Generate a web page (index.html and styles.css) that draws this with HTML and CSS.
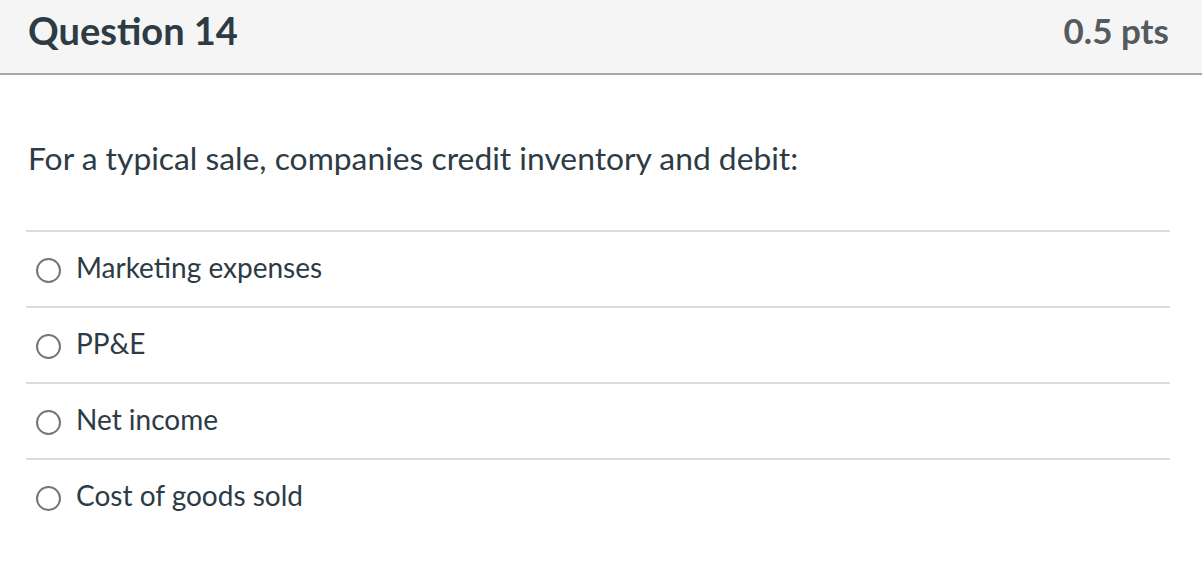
FILE: index.html
```html
<!DOCTYPE html>
<html>
<head>
<meta charset="utf-8">
<link rel="stylesheet" href="styles.css">
</head>
<body>
<div class="question">
  <div class="header">
    <span class="title">Question 14</span>
    <span class="points">0.5 pts</span>
  </div>
  <div class="body">
    <p class="text">For a typical sale, companies credit inventory and debit:</p>
    <div class="answers">
      <label class="answer"><span class="radio"></span><span class="label">Marketing expenses</span></label>
      <label class="answer"><span class="radio"></span><span class="label">PP&amp;E</span></label>
      <label class="answer"><span class="radio"></span><span class="label">Net income</span></label>
      <label class="answer"><span class="radio"></span><span class="label">Cost of goods sold</span></label>
    </div>
  </div>
</div>
</body>
</html>
```
FILE: styles.css
```css
html, body {
  margin: 0;
  padding: 0;
  background: #ffffff;
}
body {
  font-family: Lato, "Liberation Sans", sans-serif;
  color: #2d3b45;
}
.header {
  height: 73px;
  background: #f5f5f5;
  border-bottom: 2px solid #a8a8a8;
  display: flex;
  align-items: center;
  justify-content: space-between;
  padding: 0 33px 0 28px;
  box-sizing: content-box;
}
.title {
  font-weight: 700;
  font-size: 38px;
  line-height: 44px;
  color: #2d3b45;
  margin-top: -14px;
}
.points {
  font-weight: 700;
  font-size: 35px;
  line-height: 44px;
  color: #555a5e;
  margin-top: -14px;
}
.body {
  padding: 0 32px 0 26px;
}
.text {
  margin: 0;
  padding: 62px 0 0 2px;
  font-size: 31.8px;
  line-height: 42px;
  height: 93px;
}
.answers {
  display: flex;
  flex-direction: column;
}
.answer {
  display: flex;
  align-items: center;
  height: 74px;
  border-top: 2px solid #dcdcdc;
}
.radio {
  width: 25px;
  height: 25px;
  border: 2px solid #757575;
  border-radius: 50%;
  margin-left: 10px;
  margin-right: 15px;
  margin-top: 2px;
  box-sizing: border-box;
}
.label {
  font-size: 28px;
  padding-bottom: 4px;
}
```
